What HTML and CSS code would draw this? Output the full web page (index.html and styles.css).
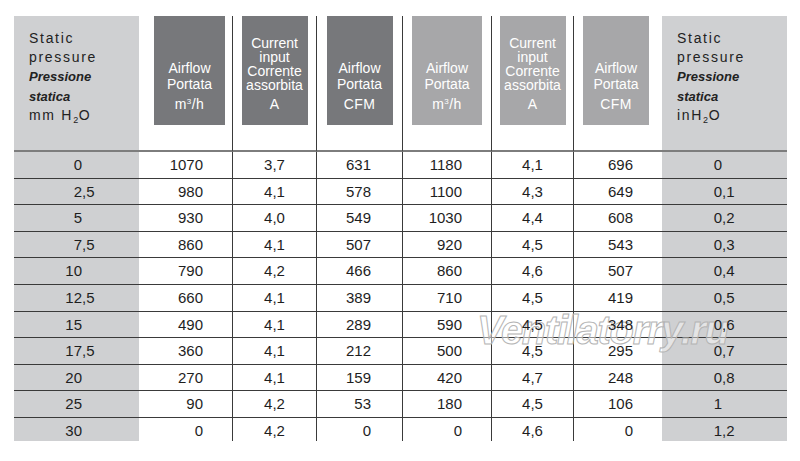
FILE: index.html
```html
<!DOCTYPE html>
<html lang="en">
<head>
<meta charset="utf-8">
<title>Fan performance table</title>
<link rel="stylesheet" href="styles.css">
</head>
<body>
<div class="sheet">
  <div class="table">
    <div class="hd gray"><div class="label">
      <span class="ln sp">Static</span>
      <span class="ln sp">pressure</span>
      <span class="ln bi">Pressione</span>
      <span class="ln bi">statica</span>
      <span class="ln sp">mm H<sub class="sb">2</sub>O</span>
    </div></div>
    <div class="hd first"><div class="box dark w71"><div class="lbl l16">Airflow<br>Portata</div><div class="unit">m<sup class="sp3">3</sup>/h</div></div></div>
    <div class="hd vl"><div class="box dark"><div class="lbl l14">Current<br>input<br>Corrente<br>assorbita</div><div class="unit">A</div></div></div>
    <div class="hd vl"><div class="box dark"><div class="lbl l16">Airflow<br>Portata</div><div class="unit">CFM</div></div></div>
    <div class="hd vl"><div class="box light w70"><div class="lbl l16">Airflow<br>Portata</div><div class="unit">m<sup class="sp3">3</sup>/h</div></div></div>
    <div class="hd vl"><div class="box light"><div class="lbl l14">Current<br>input<br>Corrente<br>assorbita</div><div class="unit">A</div></div></div>
    <div class="hd vl last"><div class="box light"><div class="lbl l16">Airflow<br>Portata</div><div class="unit">CFM</div></div></div>
    <div class="hd gray"><div class="label">
      <span class="ln sp">Static</span>
      <span class="ln sp">pressure</span>
      <span class="ln bi">Pressione</span>
      <span class="ln bi">statica</span>
      <span class="ln sp">inH<sub class="sb">2</sub>O</span>
    </div></div>

    <div class="d gray dec"><span class="v"><span class="i">0</span></span></div>
    <div class="d r"><span class="v">1070</span></div>
    <div class="d c vl"><span class="v">3,7</span></div>
    <div class="d r r31 vl"><span class="v">631</span></div>
    <div class="d r vl"><span class="v">1180</span></div>
    <div class="d c vl"><span class="v">4,1</span></div>
    <div class="d r vl"><span class="v">696</span></div>
    <div class="d gray dec2"><span class="v"><span class="i">0</span></span></div>

    <div class="d gray dec"><span class="v"><span class="i">2</span>,5</span></div>
    <div class="d r"><span class="v">980</span></div>
    <div class="d c vl"><span class="v">4,1</span></div>
    <div class="d r r31 vl"><span class="v">578</span></div>
    <div class="d r vl"><span class="v">1100</span></div>
    <div class="d c vl"><span class="v">4,3</span></div>
    <div class="d r vl"><span class="v">649</span></div>
    <div class="d gray dec2"><span class="v"><span class="i">0</span>,1</span></div>

    <div class="d gray dec"><span class="v"><span class="i">5</span></span></div>
    <div class="d r"><span class="v">930</span></div>
    <div class="d c vl"><span class="v">4,0</span></div>
    <div class="d r r31 vl"><span class="v">549</span></div>
    <div class="d r vl"><span class="v">1030</span></div>
    <div class="d c vl"><span class="v">4,4</span></div>
    <div class="d r vl"><span class="v">608</span></div>
    <div class="d gray dec2"><span class="v"><span class="i">0</span>,2</span></div>

    <div class="d gray dec"><span class="v"><span class="i">7</span>,5</span></div>
    <div class="d r"><span class="v">860</span></div>
    <div class="d c vl"><span class="v">4,1</span></div>
    <div class="d r r31 vl"><span class="v">507</span></div>
    <div class="d r vl"><span class="v">920</span></div>
    <div class="d c vl"><span class="v">4,5</span></div>
    <div class="d r vl"><span class="v">543</span></div>
    <div class="d gray dec2"><span class="v"><span class="i">0</span>,3</span></div>

    <div class="d gray dec"><span class="v"><span class="i">10</span></span></div>
    <div class="d r"><span class="v">790</span></div>
    <div class="d c vl"><span class="v">4,2</span></div>
    <div class="d r r31 vl"><span class="v">466</span></div>
    <div class="d r vl"><span class="v">860</span></div>
    <div class="d c vl"><span class="v">4,6</span></div>
    <div class="d r vl"><span class="v">507</span></div>
    <div class="d gray dec2"><span class="v"><span class="i">0</span>,4</span></div>

    <div class="d gray dec"><span class="v"><span class="i">12</span>,5</span></div>
    <div class="d r"><span class="v">660</span></div>
    <div class="d c vl"><span class="v">4,1</span></div>
    <div class="d r r31 vl"><span class="v">389</span></div>
    <div class="d r vl"><span class="v">710</span></div>
    <div class="d c vl"><span class="v">4,5</span></div>
    <div class="d r vl"><span class="v">419</span></div>
    <div class="d gray dec2"><span class="v"><span class="i">0</span>,5</span></div>

    <div class="d gray dec"><span class="v"><span class="i">15</span></span></div>
    <div class="d r"><span class="v">490</span></div>
    <div class="d c vl"><span class="v">4,1</span></div>
    <div class="d r r31 vl"><span class="v">289</span></div>
    <div class="d r vl"><span class="v">590</span></div>
    <div class="d c vl"><span class="v">4,5</span></div>
    <div class="d r vl"><span class="v">348</span></div>
    <div class="d gray dec2"><span class="v"><span class="i">0</span>,6</span></div>

    <div class="d gray dec"><span class="v"><span class="i">17</span>,5</span></div>
    <div class="d r"><span class="v">360</span></div>
    <div class="d c vl"><span class="v">4,1</span></div>
    <div class="d r r31 vl"><span class="v">212</span></div>
    <div class="d r vl"><span class="v">500</span></div>
    <div class="d c vl"><span class="v">4,5</span></div>
    <div class="d r vl"><span class="v">295</span></div>
    <div class="d gray dec2"><span class="v"><span class="i">0</span>,7</span></div>

    <div class="d gray dec"><span class="v"><span class="i">20</span></span></div>
    <div class="d r"><span class="v">270</span></div>
    <div class="d c vl"><span class="v">4,1</span></div>
    <div class="d r r31 vl"><span class="v">159</span></div>
    <div class="d r vl"><span class="v">420</span></div>
    <div class="d c vl"><span class="v">4,7</span></div>
    <div class="d r vl"><span class="v">248</span></div>
    <div class="d gray dec2"><span class="v"><span class="i">0</span>,8</span></div>

    <div class="d gray dec"><span class="v"><span class="i">25</span></span></div>
    <div class="d r"><span class="v">90</span></div>
    <div class="d c vl"><span class="v">4,2</span></div>
    <div class="d r r31 vl"><span class="v">53</span></div>
    <div class="d r vl"><span class="v">180</span></div>
    <div class="d c vl"><span class="v">4,5</span></div>
    <div class="d r vl"><span class="v">106</span></div>
    <div class="d gray dec2"><span class="v"><span class="i">1</span></span></div>

    <div class="d end gray dec"><span class="v"><span class="i">30</span></span></div>
    <div class="d end r"><span class="v">0</span></div>
    <div class="d end c vl"><span class="v">4,2</span></div>
    <div class="d end r r31 vl"><span class="v">0</span></div>
    <div class="d end r vl"><span class="v">0</span></div>
    <div class="d end c vl"><span class="v">4,6</span></div>
    <div class="d end r vl"><span class="v">0</span></div>
    <div class="d end gray dec2"><span class="v"><span class="i">1</span>,2</span></div>
  </div>
  <div class="watermark">Ventilatorry.ru</div>
</div>
</body>
</html>
```

FILE: styles.css
```css
html, body {
  margin: 0;
  padding: 0;
  background: #ffffff;
}

body {
  font-family: "Liberation Sans", Arial, sans-serif;
  color: #1e1e1e;
}

.sheet {
  position: relative;
  margin: 16px 0 0 14px;
  width: 773px;
}

.table {
  display: grid;
  grid-template-columns: 125px 93px 84px 86px 89px 82px 89px 125px;
  grid-template-rows: 136px repeat(10, 26.6px) 23.4px;
}

.gray {
  background: #cfd0d2;
}

.vl {
  border-left: 1px solid #3a3a3a;
}

/* header */
.hd {
  box-sizing: border-box;
  border-bottom: 2px solid #7d7d7d;
  display: flex;
  justify-content: center;
  align-items: flex-start;
}

.hd.gray {
  justify-content: flex-start;
}

.hd.first {
  padding-left: 8px;
}

.hd.last {
  padding-right: 4px;
}

.label {
  padding: 12.8px 0 0 15px;
  color: #222222;
}

.ln {
  display: block;
  line-height: 19.3px;
  white-space: nowrap;
}

.sp {
  font-size: 14px;
  letter-spacing: 1.7px;
}

.bi {
  font-size: 13px;
  font-weight: bold;
  font-style: italic;
}

.sb {
  font-size: 9px;
  line-height: 0;
  vertical-align: -3px;
  letter-spacing: 0.5px;
}

.box {
  box-sizing: border-box;
  width: 66px;
  height: 109px;
  display: flex;
  flex-direction: column;
  justify-content: flex-end;
  align-items: center;
  padding-bottom: 11px;
  color: #ffffff;
  font-size: 14px;
  text-align: center;
}

.box.w71 {
  width: 71px;
}

.box.w70 {
  width: 70px;
}

.dark {
  background: #77787b;
}

.light {
  background: #a7a7a9;
}

.lbl {
  margin-bottom: 2px;
  white-space: nowrap;
}

.l16 {
  line-height: 16px;
}

.l14 {
  line-height: 14px;
}

.unit {
  line-height: 20px;
  white-space: nowrap;
  letter-spacing: 0.4px;
}

.sp3 {
  font-size: 8px;
  line-height: 0;
  vertical-align: 5px;
}

/* data rows */
.d {
  box-sizing: border-box;
  border-bottom: 1px solid #3a3a3a;
  font-size: 15px;
  line-height: 25.6px;
  white-space: nowrap;
}

.d.end {
  border-bottom: none;
}

.r {
  text-align: right;
  padding-right: 29px;
}

.r31 {
  padding-right: 31px;
}

.c {
  text-align: center;
}

.dec {
  padding-left: 44px;
}

.dec2 {
  padding-left: 36px;
}

.i {
  display: inline-block;
  width: 24px;
  text-align: right;
}

.v {
  position: relative;
  z-index: 2;
}

.watermark {
  position: absolute;
  left: 463px;
  top: 294px;
  z-index: 1;
  font-size: 40px;
  line-height: 40px;
  font-weight: bold;
  font-style: italic;
  letter-spacing: -1.3px;
  color: rgba(255, 255, 255, 0.45);
  -webkit-text-stroke: 1px #b4b4b4;
  white-space: nowrap;
  pointer-events: none;
}
```
